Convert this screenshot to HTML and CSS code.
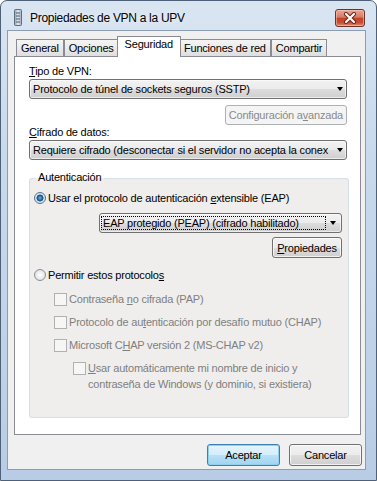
FILE: index.html
```html
<!DOCTYPE html>
<html lang="es">
<head>
  <meta charset="utf-8">
  <link rel="stylesheet" href="styles.css">
</head>
<body>
  <div class="window">
    <div class="titlebar">
      <svg class="app-icon" width="8" height="17" viewBox="0 0 8 17">
        <defs>
          <linearGradient id="srv" x1="0" y1="0" x2="1" y2="0">
            <stop offset="0" stop-color="#8a9bb0"/>
            <stop offset="0.5" stop-color="#e4eaf1"/>
            <stop offset="1" stop-color="#9aa9bb"/>
          </linearGradient>
        </defs>
        <rect x="0.5" y="0.5" width="7" height="16" rx="1" fill="url(#srv)" stroke="#5d6b7c"/>
        <path d="M2 4h4M2 7h4M2 10h4M2 13h4" stroke="#4d5a6a" stroke-width="1"/>
      </svg>
      <span class="title">Propiedades de VPN a la UPV</span>
      <div class="close-btn">
        <svg width="14" height="12" viewBox="0 0 14 12">
          <path d="M3 2l8 8M11 2l-8 8" stroke="#6a2114" stroke-width="4" stroke-linecap="round"/>
          <path d="M3 2l8 8M11 2l-8 8" stroke="#fff" stroke-width="2.2" stroke-linecap="round"/>
        </svg>
      </div>
    </div>

    <div class="client">
      <div class="tabs">
        <div class="tab">General</div>
        <div class="tab">Opciones</div>
        <div class="tab active">Seguridad</div>
        <div class="tab">Funciones de red</div>
        <div class="tab">Compartir</div>
      </div>

      <div class="panel">
        <div class="label"><u>T</u>ipo de VPN:</div>
        <div class="combo">
          <span class="value">Protocolo de túnel de sockets seguros (SSTP)</span>
          <span class="arrow"></span>
        </div>
        <div class="row-right">
          <button class="btn btn-adv" disabled>Configuración a<u>v</u>anzada</button>
        </div>
        <div class="label"><u>C</u>ifrado de datos:</div>
        <div class="combo">
          <span class="value">Requiere cifrado (desconectar si el servidor no acepta la conex</span>
          <span class="arrow"></span>
        </div>

        <fieldset class="group">
          <legend>Autenticación</legend>
          <div class="option">
            <span class="radio checked"></span>
            <span>Usar el protocolo de autenticación <u>e</u>xtensible (EAP)</span>
          </div>
          <div class="combo combo-eap">
            <span class="value focus">EAP protegido (PEAP) (cifrado habilitado)</span>
            <span class="arrow"></span>
          </div>
          <div class="row-right">
            <button class="btn btn-props"><u>P</u>ropiedades</button>
          </div>
          <div class="option option-second">
            <span class="radio"></span>
            <span>Permitir estos protocolo<u>s</u></span>
          </div>
          <div class="checks">
            <div class="check-row">
              <span class="checkbox"></span>
              <span>Contraseña <u>n</u>o cifrada (PAP)</span>
            </div>
            <div class="check-row">
              <span class="checkbox"></span>
              <span>Protocolo de au<u>t</u>enticación por desafío mutuo (CHAP)</span>
            </div>
            <div class="check-row">
              <span class="checkbox"></span>
              <span>Microsoft C<u>H</u>AP versión 2 (MS-CHAP v2)</span>
            </div>
            <div class="check-row nested">
              <span class="checkbox"></span>
              <span><u>U</u>sar automáticamente mi nombre de inicio y<br>contraseña de Windows (y dominio, si existiera)</span>
            </div>
          </div>
        </fieldset>
      </div>

      <div class="footer">
        <button class="btn btn-default">Aceptar</button>
        <button class="btn btn-footer">Cancelar</button>
      </div>
    </div>
  </div>
</body>
</html>
```

FILE: styles.css
```css
* {
    box-sizing: border-box;
}
body {
    margin: 0;
    background: #fff;
    font-family: "Liberation Sans", Arial, sans-serif;
    font-size: 11px;
    letter-spacing: -0.2px;
    color: #000;
}

/* window frame */
.window {
    width: 377px;
    height: 481px;
    display: flex;
    flex-direction: column;
    padding: 0 10px 10px 6px;
    border: 1px solid #4f6178;
    border-radius: 7px 7px 0 0;
    background: linear-gradient(180deg, #dae5f2 0%, #c9daec 30%, #b8cde5 100%);
}
.titlebar {
    height: 30px;
    display: flex;
    align-items: center;
    padding: 4px 1px 0 7px;
}
.app-icon {
    margin-right: 8px;
}
.title {
    font-size: 12px;
    letter-spacing: -0.3px;
    text-shadow: 0 0 6px rgba(255, 255, 255, 0.9);
}
.close-btn {
    margin-left: auto;
    width: 30px;
    height: 18px;
    display: flex;
    align-items: center;
    justify-content: center;
    border: 1px solid #6b3428;
    border-radius: 3px;
    background: linear-gradient(180deg, #e9a899 0%, #d67a64 45%, #c2432a 52%, #c54d32 78%, #df8a6c 100%);
    box-shadow: inset 0 0 0 1px rgba(255, 210, 195, 0.5);
}

/* client area */
.client {
    flex: 1;
    display: flex;
    flex-direction: column;
    padding: 5px 4px 3px 6px;
    border: 1px solid #8c9db3;
    background: #f0f0f0;
}

/* tabs */
.tabs {
    height: 21px;
    display: flex;
    align-items: flex-end;
    margin: 0 0 -1px 2px;
    position: relative;
    z-index: 1;
}
.tab {
    height: 17px;
    margin-bottom: 1px;
    padding: 1px 4px 0;
    line-height: 15px;
    white-space: nowrap;
    border: 1px solid #898c95;
    border-bottom: none;
    background: linear-gradient(180deg, #f4f4f4 0%, #ebebeb 50%, #dedede 100%);
}
.tab.active {
    height: 21px;
    margin: 0 -2px;
    padding: 0 7px;
    background: #fff;
    position: relative;
    z-index: 2;
}

/* tab page */
.panel {
    padding: 7px 13px 16px 14px;
    border: 1px solid #898c95;
    background: #fff;
}
.label {
    line-height: 14px;
}
.combo {
    height: 20px;
    margin-top: 1px;
    display: flex;
    align-items: center;
    padding: 0 3px 0 3px;
    border: 1px solid #707070;
    border-radius: 3px;
    background: linear-gradient(180deg, #f2f2f2 0%, #ebebeb 50%, #dddddd 51%, #cfcfcf 100%);
    box-shadow: inset 0 0 0 1px rgba(255, 255, 255, 0.6);
}
.combo .value {
    flex: 1;
    white-space: nowrap;
    overflow: hidden;
}
.combo .arrow {
    width: 0;
    height: 0;
    margin-left: 3px;
    border-left: 3.5px solid transparent;
    border-right: 3.5px solid transparent;
    border-top: 4px solid #000;
}
.row-right {
    display: flex;
    justify-content: flex-end;
}
.btn {
    height: 20px;
    padding: 0 3px;
    font: inherit;
    letter-spacing: inherit;
    white-space: nowrap;
    color: #000;
    border: 1px solid #707070;
    border-radius: 3px;
    background: linear-gradient(180deg, #f2f2f2 0%, #ebebeb 50%, #dddddd 51%, #cfcfcf 100%);
    box-shadow: inset 0 0 0 1px rgba(255, 255, 255, 0.7);
}
.btn:disabled {
    color: #8a8a8a;
    border-color: #adb2b5;
    background: #f4f4f4;
    box-shadow: none;
}
.btn-adv {
    margin-top: 6px;
    padding: 0 3px;
}

/* group box */
.group {
    margin: 10px -2px 0 0;
    padding: 3px 6px 25px 4px;
    border: 1px solid #d5dfe5;
    border-radius: 3px;
    background: #efeeec;
}
.group legend {
    margin-left: 1px;
    padding: 0 3px 3px;
    line-height: 14px;
}
.option {
    height: 16px;
    display: flex;
    align-items: center;
}
.option-second {
    margin-top: 9px;
}
.radio {
    width: 12px;
    height: 12px;
    margin-right: 2px;
    border: 1px solid #8a8f96;
    border-radius: 50%;
    background: radial-gradient(circle, #ffffff 0, #e6e8eb 60%, #cfd3d8 100%);
}
.radio.checked {
    border-color: #5c7186;
    background: radial-gradient(circle, #6fb2e4 0, #2a6fa8 2px, #174f80 3.2px, #cfe1ee 3.8px, #f4f7fa 100%);
}
.combo-eap {
    height: 20px;
    margin: 7px 0 0 65px;
    padding: 0 5px 0 1px;
}
.combo-eap .value {
    flex: 0 0 225px;
    margin-right: auto;
    height: 14px;
    line-height: 12px;
    padding-left: 1px;
    border: 1px dotted #000;
}
.btn-props {
    margin-top: 4px;
    width: 70px;
    height: 21px;
}

/* disabled protocol list */
.checks {
    margin: 8px 0 0 20px;
    display: flex;
    flex-direction: column;
    gap: 7px;
    color: #7f7f7f;
}
.check-row {
    display: flex;
    align-items: center;
    line-height: 16px;
}
.check-row.nested {
    align-items: flex-start;
    margin-left: 19px;
}
.checkbox {
    width: 13px;
    height: 13px;
    flex: none;
    margin-right: 2px;
    border: 1px solid #b1b1b1;
    background: #f6f6f6;
}
.nested .checkbox {
    margin-top: 2px;
}

/* dialog buttons */
.footer {
    display: flex;
    justify-content: flex-end;
    gap: 9px;
    margin: 9px -1px 0 0;
}
.btn-footer,
.btn-default {
    width: 73px;
    height: 22px;
}
.btn-default {
    border-color: #3c7fb1;
    background: linear-gradient(180deg, #e5f4fc 0%, #d3eefb 50%, #b8e1f6 51%, #a2d4ef 100%);
    box-shadow: inset 0 0 0 1px #8fd0ee;
}
```
